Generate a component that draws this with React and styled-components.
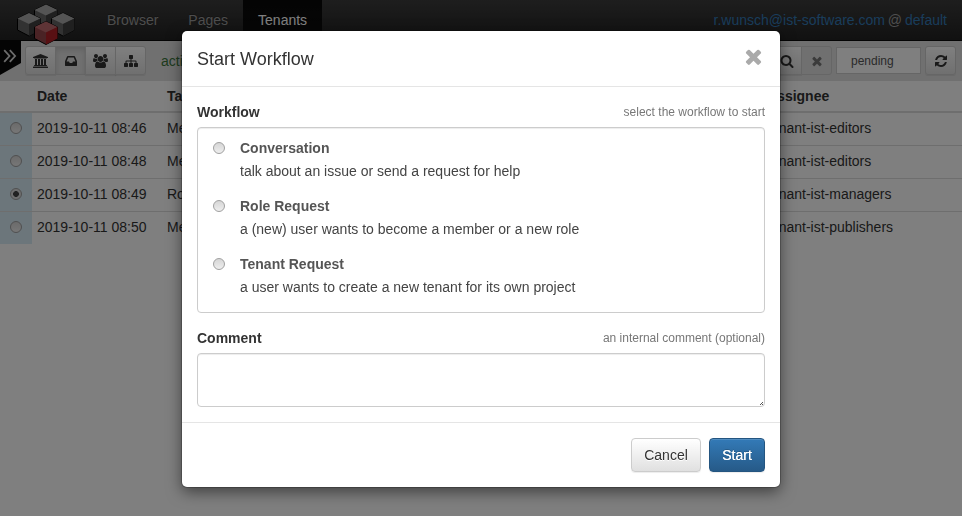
import React from 'react';
import styled, { createGlobalStyle, css } from 'styled-components';

const GlobalStyle = createGlobalStyle`
  *, *::before, *::after { box-sizing: border-box; }
  html, body { margin: 0; height: 100%; overflow: hidden; }
  body {
    background: #fff;
    color: #333;
    font: 14px/20px "Liberation Sans", Arial, sans-serif;
  }
`;

const Page = styled.div`
  height: 516px;
  width: 962px;
  overflow: hidden;
`;

const Navbar = styled.header`
  height: 41px;
  display: flex;
  padding-left: 92px;
  padding-right: 15px;
  background: linear-gradient(#3c3c3c, #222);
  border-bottom: 1px solid #080808;
`;

const NavItem = styled.a`
  display: block;
  padding: 10px 15px;
  height: 40px;
  white-space: nowrap;
  text-shadow: 0 -1px 0 rgba(0, 0, 0, 0.25);
  color: ${(p) => (p.$active ? '#fff' : '#9d9d9d')};
  ${(p) => p.$active && css`background: linear-gradient(#080808, #0f0f0f);`}
`;

const Account = styled.div`
  margin-left: auto;
  padding: 10px 0;
  color: #9d9d9d;
  a { color: #337ab7; }
`;

const AtSign = styled.span`
  margin: 0 -1px;
`;

const Logo = styled.svg`
  position: absolute;
  left: 16px;
  top: 3px;
`;

const MenuTab = styled.div`
  width: 21px;
  height: 34px;
  flex: none;
  align-self: flex-start;
  background: #080808;
  clip-path: polygon(0 0, 100% 0, 100% 22px, 0 100%);
`;

const Toolbar = styled.div`
  display: flex;
  align-items: center;
  height: 40px;
  padding-bottom: 1px;
  background: #e1e1e1;
`;

const ButtonGroup = styled.div`
  display: flex;
  margin-left: ${(p) => p.$offset}px;
`;

const ToolButton = styled.button`
  width: 31px;
  height: 29px;
  margin-left: -1px;
  padding: 1px 0 0;
  display: flex;
  align-items: center;
  justify-content: center;
  border: 1px solid #ccc;
  border-radius: 0;
  color: ${(p) => (p.$muted ? '#777' : '#333')};
  background: linear-gradient(#fff, #e0e0e0);
  box-shadow: inset 0 1px 0 rgba(255, 255, 255, 0.15), 0 1px 1px rgba(0, 0, 0, 0.075);
  &:first-child { margin-left: 0; border-radius: 3px 0 0 3px; }
  &:last-child { border-radius: 0 3px 3px 0; }
  &:only-child { border-radius: 3px; }
  ${(p) => p.$flat && css`
    background: #e0e0e0;
    box-shadow: ${p.$pressed ? 'inset 0 3px 5px rgba(0, 0, 0, 0.125)' : 'none'};
  `}
`;

const Status = styled.span`
  margin-left: 15px;
  flex: 1;
  color: #3c763d;
`;

const StateField = styled.input`
  width: 85px;
  height: 27px;
  margin: 0 4px;
  padding: 0 14px;
  border: 1px solid #ccc;
  border-radius: 0;
  background: #fff;
  color: #555;
  font: 12px/18px "Liberation Sans", Arial, sans-serif;
`;

const TaskTable = styled.div`
  display: grid;
`;

const Row = styled.div`
  display: grid;
  grid-template-columns: 32px 130px 600px 1fr;
  height: ${(p) => (p.$first ? 32 : 33)}px;
  border-top: ${(p) => (p.$first ? 0 : 1)}px solid #ddd;
`;

const HeadRow = styled(Row)`
  height: 32px;
  border-top: 0;
  border-bottom: 2px solid #ddd;
  font-weight: bold;
`;

const Cell = styled.div`
  padding: 5px;
  white-space: nowrap;
`;

const SelectCell = styled(Cell)`
  padding: 9px 0 0 10px;
  background: #d9edf7;
`;

const Radio = styled.span`
  display: block;
  width: 12px;
  height: 12px;
  flex: none;
  border: 1px solid #a0a0a0;
  border-radius: 50%;
  background: linear-gradient(#d6d6d6, #eee);
  ${(p) => p.$checked && css`
    background: radial-gradient(circle, #444 0 2.6px, transparent 3.2px), #ddd;
  `}
`;

const Backdrop = styled.div`
  position: fixed;
  inset: 0;
  background: rgba(0, 0, 0, 0.5);
`;

const Dialog = styled.section`
  position: absolute;
  left: 182px;
  top: 31px;
  width: 598px;
  height: 456px;
  border-radius: 5px;
  background: #fff;
  box-shadow: 0 0 0 1px rgba(0, 0, 0, 0.2), 0 5px 15px rgba(0, 0, 0, 0.5);
`;

const DialogHeader = styled.div`
  display: flex;
  align-items: flex-start;
  justify-content: space-between;
  height: 56px;
  padding: 15px 15px 0;
  border-bottom: 1px solid #e5e5e5;
`;

const Title = styled.h4`
  margin: 0;
  font-size: 18px;
  font-weight: normal;
  line-height: 26px;
`;

const CloseButton = styled.button`
  display: flex;
  align-items: center;
  justify-content: center;
  width: 23px;
  height: 20px;
  padding: 0;
  border: 0;
  background: none;
  color: #aaa;
  svg { flex: none; }
`;

const DialogBody = styled.div`
  height: 335px;
  padding: 15px;
`;

const FieldHead = styled.div`
  display: flex;
  justify-content: space-between;
  height: 25px;
`;

const Label = styled.label`
  font-weight: bold;
`;

const Hint = styled.small`
  color: #777;
  font-size: 12px;
`;

const fieldBox = css`
  border: 1px solid #ccc;
  border-radius: 4px;
  background: #fff;
  box-shadow: inset 0 1px 1px rgba(0, 0, 0, 0.075);
`;

const Options = styled.div`
  ${fieldBox}
  height: 186px;
  margin-bottom: 15px;
  padding: 7px 15px;
  color: #555;
`;

const Option = styled.div`
  display: flex;
  height: 58px;
  gap: 15px;
`;

const OptionRadio = styled(Radio)`
  margin-top: 7px;
`;

const OptionText = styled.div`
  line-height: 26px;
`;

const OptionDescription = styled.div`
  line-height: 20px;
  color: #444;
`;

const CommentArea = styled.textarea`
  ${fieldBox}
  display: block;
  width: 100%;
  height: 54px;
  resize: none;
`;

const CommentWrap = styled.div`
  position: relative;
`;

const Grip = styled.svg`
  position: absolute;
  right: 2px;
  bottom: 2px;
`;

const DialogFooter = styled.div`
  display: flex;
  justify-content: flex-end;
  gap: 8px;
  padding: 15px;
  border-top: 1px solid #e5e5e5;
`;

const Button = styled.button`
  width: ${(p) => p.$width}px;
  height: 34px;
  padding: 0 0 1px;
  border: 1px solid ${(p) => (p.$primary ? '#245580' : '#ccc')};
  border-radius: 4px;
  color: ${(p) => (p.$primary ? '#fff' : '#333')};
  background: ${(p) => (p.$primary ? 'linear-gradient(#337ab7, #265a88)' : 'linear-gradient(#fff, #e0e0e0)')};
  text-shadow: ${(p) => (p.$primary ? '0 0 0.5px #fff, 0 -1px 0 rgba(0,0,0,.2)' : '0 1px 0 #fff')};
  box-shadow: inset 0 1px 0 rgba(255, 255, 255, 0.15), 0 1px 1px rgba(0, 0, 0, 0.075);
  font: 14px/20px "Liberation Sans", Arial, sans-serif;
`;

const glyphs = {
  university: { w: 1920, d: 'M960 0l960 384v128h-128q0 26-20.5 45t-48.5 19h-1526q-28 0-48.5-19t-20.5-45h-128v-128zm-704 640h256v768h128v-768h256v768h128v-768h256v768h128v-768h256v768h59q28 0 48.5 19t20.5 45v64h-1664v-64q0-26 20.5-45t48.5-19h59zm1595 960q28 0 48.5 19t20.5 45v128h-1920v-128q0-26 20.5-45t48.5-19z' },
  inbox: { w: 1792, d: 'M1151 960h316q-1-3-2.5-8.5t-2.5-7.5l-212-496h-708l-212 496q-1 3-2.5 8t-2.5 8h316l95 192h320zm513 30v482q0 26-19 45t-45 19h-1408q-26 0-45-19t-19-45v-482q0-62 25-123l238-552q10-25 36.5-42t52.5-17h832q26 0 52.5 17t36.5 42l238 552q25 61 25 123z' },
  users: { w: 1920, d: 'M593 896q-162 5-265 128h-134q-82 0-138-40.5t-56-118.5q0-353 124-353 6 0 43.5 21t97.5 42.5 119 21.5q67 0 133-23-5 37-5 66 0 139 81 256zm1071 637q0 120-73 189.5t-194 69.5h-874q-121 0-194-69.5t-73-189.5q0-53 3.5-103.5t14-109 26.5-108.5 43-97.5 62-81 85.5-53.5 111.5-20q10 0 43 21.5t73 48 107 48 135 21.5 135-21.5 107-48 73-48 43-21.5q61 0 111.5 20t85.5 53.5 62 81 43 97.5 26.5 108.5 14 109 3.5 103.5zm-1024-1277q0 106-75 181t-181 75-181-75-75-181 75-181 181-75 181 75 75 181zm704 384q0 159-112.5 271.5t-271.5 112.5-271.5-112.5-112.5-271.5 112.5-271.5 271.5-112.5 271.5 112.5 112.5 271.5zm576 225q0 78-56 118.5t-138 40.5h-134q-103-123-265-128 81-117 81-256 0-29-5-66 66 23 133 23 59 0 119-21.5t97.5-42.5 43.5-21q124 0 124 353zm-128-609q0 106-75 181t-181 75-181-75-75-181 75-181 181-75 181 75 75 181z' },
  sitemap: { w: 1792, d: 'M1792 1248v320q0 40-28 68t-68 28h-320q-40 0-68-28t-28-68v-320q0-40 28-68t68-28h96v-192h-512v192h96q40 0 68 28t28 68v320q0 40-28 68t-68 28h-320q-40 0-68-28t-28-68v-320q0-40 28-68t68-28h96v-192h-512v192h96q40 0 68 28t28 68v320q0 40-28 68t-68 28h-320q-40 0-68-28t-28-68v-320q0-40 28-68t68-28h96v-192q0-52 38-90t90-38h512v-192h-96q-40 0-68-28t-28-68v-320q0-40 28-68t68-28h320q40 0 68 28t28 68v320q0 40-28 68t-68 28h-96v192h512q52 0 90 38t38 90v192h96q40 0 68 28t28 68z' },
  search: { w: 1792, d: 'M1216 832q0-185-131.5-316.5t-316.5-131.5-316.5 131.5-131.5 316.5 131.5 316.5 316.5 131.5 316.5-131.5 131.5-316.5zm512 832q0 52-38 90t-90 38q-54 0-90-38l-343-342q-179 124-399 124-143 0-273.5-55.5t-225-150-150-225-55.5-273.5 55.5-273.5 150-225 225-150 273.5-55.5 273.5 55.5 225 150 150 225 55.5 273.5q0 220-124 399l343 343q37 37 37 90z' },
  times: { w: 1792, d: 'M1490 1322q0 40-28 68l-136 136q-28 28-68 28t-68-28l-294-294-294 294q-28 28-68 28t-68-28l-136-136q-28-28-28-68t28-68l294-294-294-294q-28-28-28-68t28-68l136-136q28-28 68-28t68 28l294 294 294-294q28-28 68-28t68 28l136 136q28 28 28 68t-28 68l-294 294 294 294q28 28 28 68z' },
  refresh: { w: 1792, d: 'M1639 1056q0 5-1 7-64 268-268 434.5t-478 166.5q-146 0-282.5-55t-243.5-157l-129 129q-19 19-45 19t-45-19-19-45v-448q0-26 19-45t45-19h448q26 0 45 19t19 45-19 45l-137 137q71 66 161 102t187 36q134 0 250-65t186-179q11-17 53-117 8-23 30-23h192q13 0 22.5 9.5t9.5 22.5zm25-800v448q0 26-19 45t-45 19h-448q-26 0-45-19t-19-45 19-45l138-138q-148-137-349-137-134 0-250 65t-186 179q-11 17-53 117-8 23-30 23h-199q-13 0-22.5-9.5t-9.5-22.5v-7q65-268 270-434.5t480-166.5q146 0 284 55.5t245 156.5l130-129q19-19 45-19t45 19 19 45z' },
};

function Icon({ name, size = 14 }) {
  const { w, d } = glyphs[name];
  return (
    <svg width={(size * w) / 1792} height={size} viewBox={`0 0 ${w} 1792`} fill="currentColor">
      <path d={d} />
    </svg>
  );
}

function Cube({ x, y, top, left, right }) {
  return (
    <g transform={`translate(${x} ${y})`}>
      <path d="M11.5 0L23 5.5V17L11.5 23 0 17V5.5z" fill={left} stroke="#000" strokeWidth="1" />
      <path d="M11.5 0L23 5.5 11.5 11 0 5.5z" fill={top} />
      <path d="M23 5.5L11.5 11v12L23 17z" fill={right} />
    </g>
  );
}

const gray = { top: '#a8a8a8', left: '#646464', right: '#404040' };

const tasks = [
  { date: '2019-10-11 08:46', task: 'Membership', assignee: 'tenant-ist-editors' },
  { date: '2019-10-11 08:48', task: 'Membership', assignee: 'tenant-ist-editors' },
  { date: '2019-10-11 08:49', task: 'Role', assignee: 'tenant-ist-managers', checked: true },
  { date: '2019-10-11 08:50', task: 'Membership', assignee: 'tenant-ist-publishers' },
];

const workflows = [
  { name: 'Conversation', text: 'talk about an issue or send a request for help' },
  { name: 'Role Request', text: 'a (new) user wants to become a member or a new role' },
  { name: 'Tenant Request', text: 'a user wants to create a new tenant for its own project' },
];

export default function App() {
  return (
    <Page>
      <GlobalStyle />
      <Navbar>
        <NavItem>Browser</NavItem>
        <NavItem>Pages</NavItem>
        <NavItem $active>Tenants</NavItem>
        <Account><a>r.wunsch@ist-software.com</a> <AtSign>@</AtSign> <a>default</a></Account>
      </Navbar>
      <Toolbar>
        <MenuTab>
          <svg width="21" height="34" fill="none" stroke="#d8d8d8" strokeWidth="1.8">
            <path d="M4.2 9.2l5.3 5.8-5.3 5.8M9.8 9.2l5.3 5.8-5.3 5.8" />
          </svg>
        </MenuTab>
        <ButtonGroup $offset={4}>
          <ToolButton><Icon name="university" /></ToolButton>
          <ToolButton $flat $pressed><Icon name="inbox" /></ToolButton>
          <ToolButton><Icon name="users" /></ToolButton>
          <ToolButton><Icon name="sitemap" /></ToolButton>
        </ButtonGroup>
        <Status>active</Status>
        <ButtonGroup $offset={0}>
          <ToolButton><Icon name="search" /></ToolButton>
          <ToolButton $flat $muted><Icon name="times" /></ToolButton>
        </ButtonGroup>
        <StateField defaultValue="pending" />
        <ButtonGroup $offset={0}>
          <ToolButton><Icon name="refresh" /></ToolButton>
        </ButtonGroup>
        <ButtonGroup $offset={6} />
      </Toolbar>
      <TaskTable>
        <HeadRow>
          <Cell />
          <Cell>Date</Cell>
          <Cell>Task</Cell>
          <Cell>Assignee</Cell>
        </HeadRow>
        {tasks.map((t, i) => (
          <Row key={t.date} $first={i === 0}>
            <SelectCell><Radio $checked={t.checked} /></SelectCell>
            <Cell>{t.date}</Cell>
            <Cell>{t.task}</Cell>
            <Cell>{t.assignee}</Cell>
          </Row>
        ))}
      </TaskTable>
      <Logo width="60" height="44">
        <Cube x={18.5} y={1.5} {...gray} />
        <Cube x={1.5} y={10} {...gray} />
        <Cube x={35.5} y={10} {...gray} />
        <Cube x={18.5} y={18.5} top="#bd686c" left="#95474b" right="#b02026" />
      </Logo>
      <Backdrop />
      <Dialog>
        <DialogHeader>
          <Title>Start Workflow</Title>
          <CloseButton><Icon name="times" size={23} /></CloseButton>
        </DialogHeader>
        <DialogBody>
          <FieldHead>
            <Label>Workflow</Label>
            <Hint>select the workflow to start</Hint>
          </FieldHead>
          <Options>
            {workflows.map((w) => (
              <Option key={w.name}>
                <OptionRadio />
                <OptionText>
                  <Label>{w.name}</Label>
                  <OptionDescription>{w.text}</OptionDescription>
                </OptionText>
              </Option>
            ))}
          </Options>
          <FieldHead>
            <Label>Comment</Label>
            <Hint>an internal comment (optional)</Hint>
          </FieldHead>
          <CommentWrap>
            <CommentArea />
            <Grip width="3" height="3" stroke="#444" strokeWidth="0.9">
              <path d="M0 3L3 0M2 3L3 2" />
            </Grip>
          </CommentWrap>
        </DialogBody>
        <DialogFooter>
          <Button $width={70}>Cancel</Button>
          <Button $width={56} $primary>Start</Button>
        </DialogFooter>
      </Dialog>
    </Page>
  );
}
